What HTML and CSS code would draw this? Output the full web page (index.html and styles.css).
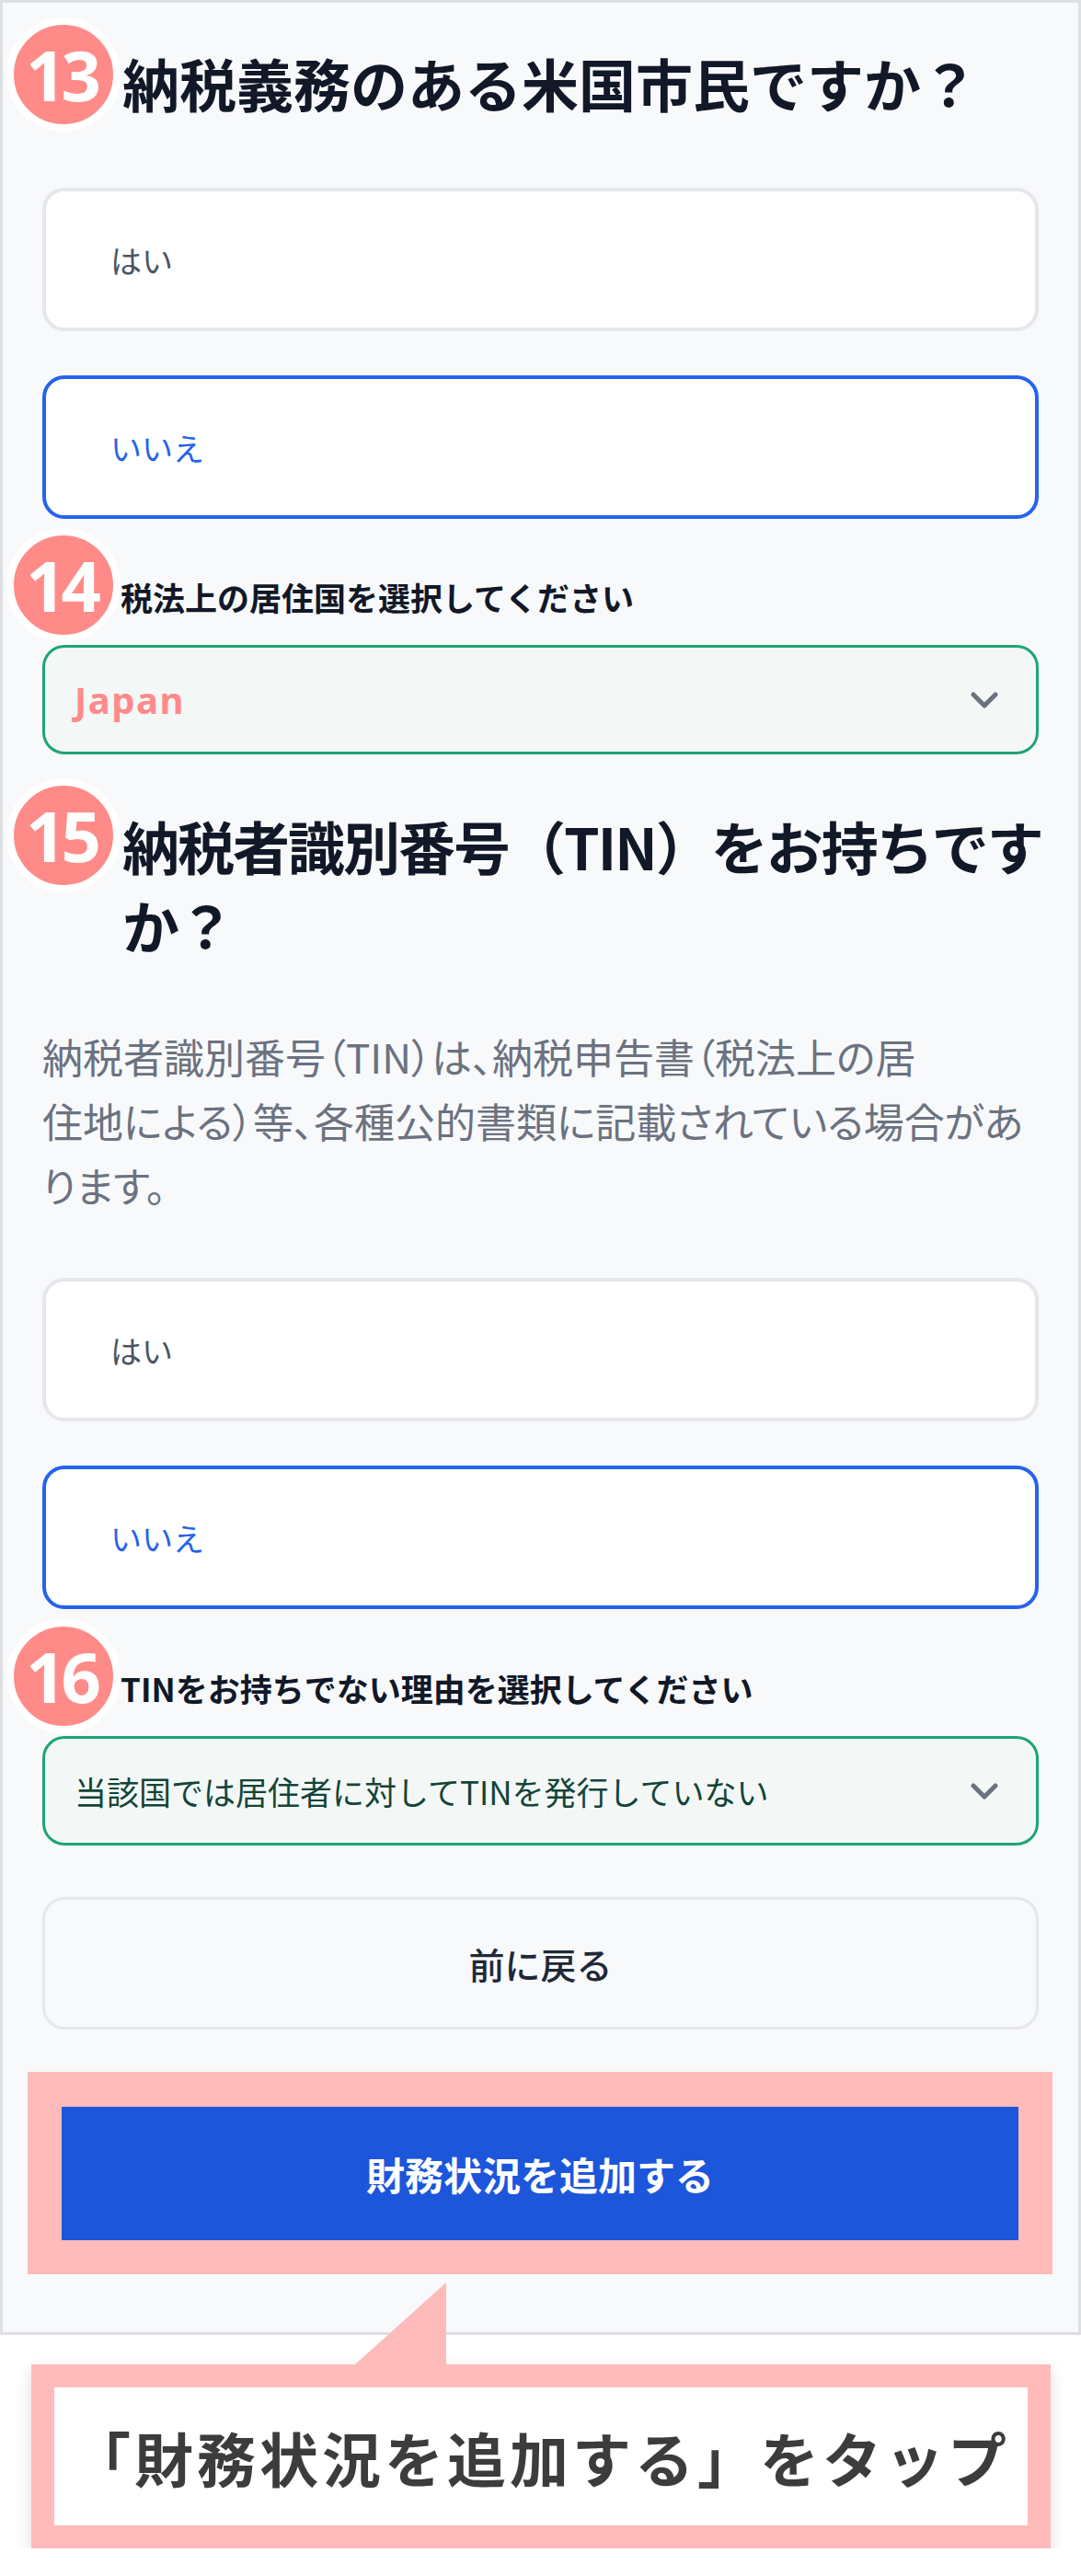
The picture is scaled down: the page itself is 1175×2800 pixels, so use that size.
FILE: index.html
```html
<!DOCTYPE html>
<html lang="ja">
<head>
  <meta charset="UTF-8">
  <meta name="viewport" content="width=device-width, initial-scale=1.0">
  <title>財務状況の追加</title>
  <link rel="stylesheet" href="styles.css">
</head>
<body>

<div class="screen">

  <div class="q-head">
    <span class="badge">13</span>
    <h2 class="q-title">納税義務のある米国市民ですか？</h2>
  </div>
  <div class="options">
    <div class="option">はい</div>
    <div class="option selected">いいえ</div>
  </div>

  <div class="field-head">
    <span class="badge">14</span>
    <label class="field-label">税法上の居住国を選択してください</label>
  </div>
  <div class="select">
    <span class="value-pick">Japan</span>
    <svg class="chevron" width="30" height="18" viewBox="0 0 30 18"><path d="M3 3 L15 15 L27 3" fill="none" stroke="#6b7280" stroke-width="5" stroke-linecap="round" stroke-linejoin="round"/></svg>
  </div>

  <div class="q-head q-head-tin">
    <span class="badge">15</span>
    <h2 class="q-title">納税者識別番号（TIN）をお持ちですか？</h2>
  </div>
  <p class="note">納税者識別番号（TIN）は、納税申告書（税法上の居<br>住地による）等、各種公的書類に記載されている場合があります。</p>
  <div class="options options-tin">
    <div class="option">はい</div>
    <div class="option selected">いいえ</div>
  </div>

  <div class="field-head field-head-reason">
    <span class="badge">16</span>
    <label class="field-label">TINをお持ちでない理由を選択してください</label>
  </div>
  <div class="select">
    <span class="value">当該国では居住者に対してTINを発行していない</span>
    <svg class="chevron" width="30" height="18" viewBox="0 0 30 18"><path d="M3 3 L15 15 L27 3" fill="none" stroke="#6b7280" stroke-width="5" stroke-linecap="round" stroke-linejoin="round"/></svg>
  </div>

  <button class="btn-back">前に戻る</button>

  <div class="highlight">
    <button class="btn-submit">財務状況を追加する</button>
  </div>

</div>

<div class="callout">「財務状況を追加する」をタップ</div>

</body>
</html>
```

FILE: styles.css
```css
* {
  box-sizing: border-box;
}
body {
  margin: 0;
  background: #fff;
  font-family: "Noto Sans CJK JP", "Noto Sans", sans-serif;
}
.screen {
  background: #f8f9fb;
  border: 3px solid #dedfe2;
  padding: 16px 43px 63px;
}

/* question rows with the numbered markers */
.q-head,
.field-head {
  display: flex;
  align-items: flex-start;
  margin-left: -39px;
}
.badge {
  flex: none;
  width: 124px;
  height: 124px;
  border-radius: 50%;
  border: 8px solid #fff;
  background: #ff8b88;
  color: #fff;
  display: flex;
  align-items: center;
  justify-content: center;
  font-family: "Noto Sans", sans-serif;
  font-weight: 700;
  font-size: 76px;
  letter-spacing: -5px;
  line-height: 1;
  padding-right: 5px;
}
.q-title {
  margin: 28px 0 0 2px;
  font-size: 62px;
  line-height: 86px;
  font-weight: 700;
  color: #111827;
}
.q-head-tin {
  margin-top: 26px;
  margin-right: -22px;
}
.q-head-tin .q-title {
  margin-top: 30px;
  letter-spacing: -2px;
}

.field-head {
  margin-top: 10px;
}
.field-head-reason {
  margin-top: 11px;
}
.field-label {
  margin: 50px 0 0 0;
  font-size: 35px;
  line-height: 50px;
  font-weight: 700;
  color: #111827;
}

/* answer cards */
.options {
  display: flex;
  flex-direction: column;
  gap: 48px;
  margin-top: 61px;
}
.options-tin {
  margin-top: 66px;
}
.option {
  height: 156px;
  background: #fff;
  border: 4px solid #e5e7eb;
  border-radius: 24px;
  display: flex;
  align-items: center;
  padding-left: 70px;
  font-size: 34px;
  color: #4b5563;
}
.option.selected {
  border-color: #2563eb;
  color: #2563eb;
}

/* dropdowns */
.select {
  margin-top: 3px;
  height: 119px;
  background: #f3f8f6;
  border: 3px solid #1ea476;
  border-radius: 24px;
  display: flex;
  align-items: center;
  justify-content: space-between;
  padding: 0 41px 0 32px;
}
.value-pick {
  font-family: "Noto Sans", sans-serif;
  font-weight: 700;
  font-size: 40px;
  letter-spacing: 1.5px;
  color: #ff8a8a;
}
.value {
  font-size: 35px;
  color: #134438;
}

.note {
  margin: 65px 0 0;
  font-size: 44px;
  line-height: 70px;
  color: #6b7280;
  font-feature-settings: "palt";
}

/* buttons */
.btn-back {
  display: block;
  width: 100%;
  height: 144px;
  margin-top: 56px;
  background: #f8f9fb;
  border: 3px solid #e5e7eb;
  border-radius: 24px;
  font-family: inherit;
  font-size: 39px;
  font-weight: 500;
  color: #1f2937;
}
.highlight {
  margin: 46px -15px 0 -16px;
  padding: 38px 37px 37px;
  background: #ffbaba;
}
.btn-submit {
  display: block;
  width: 100%;
  height: 145px;
  border: none;
  background: #1c56db;
  color: #fff;
  font-family: inherit;
  font-size: 42px;
  font-weight: 700;
}

/* tap hint below the phone */
.callout {
  position: relative;
  margin: 32px 33px 0 34px;
  height: 200px;
  border: 25px solid #ffbaba;
  background: #fff;
  box-shadow: 0 6px 16px rgba(0, 0, 0, 0.14);
  display: flex;
  align-items: center;
  justify-content: center;
  font-size: 64px;
  font-weight: 700;
  letter-spacing: 4px;
  color: #3c3c3c;
}
.callout::before {
  content: "";
  position: absolute;
  left: 327px;
  top: -114px;
  width: 99px;
  height: 114px;
  background: #ffbaba;
  clip-path: polygon(100% 0, 100% 100%, 0 100%, 0 89px);
}
```
